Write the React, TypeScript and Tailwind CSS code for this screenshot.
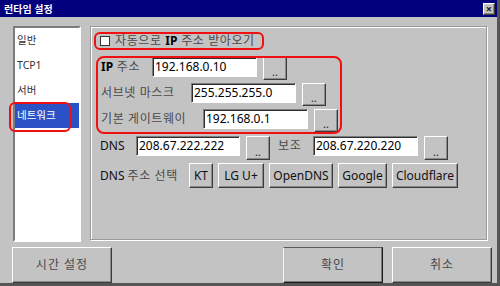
import React from 'react';

const raised =
  'border border-t-white border-l-white border-r-[#3c3c3c] border-b-[#3c3c3c] shadow-[inset_-1px_-1px_0_#8a8a8a] bg-[#c4c3c4]';
const sunken =
  'border border-t-[#7c7c7c] border-l-[#7c7c7c] border-r-white border-b-white shadow-[inset_1px_1px_0_#2e2e2e] bg-white';

const Ko: React.FC<{ children: React.ReactNode }> = ({ children }) => (
  <span className="text-[#4a4a4a] tracking-[0.6px]">{children}</span>
);

const DotButton: React.FC<{ h?: string }> = ({ h = 'h-[23px]' }) => (
  <button className={`${raised} w-[24px] ${h} flex items-end justify-center pb-[2px] text-[11px] leading-none text-[#222]`}>
    ..
  </button>
);

const Field: React.FC<{ value: string; w?: string }> = ({ value, w = 'w-[105px]' }) => (
  <div className={`${sunken} ${w} h-[20px] flex items-center pl-[2px] text-[12px] text-black leading-none`}>{value}</div>
);

interface IpRowProps {
  label: React.ReactNode;
  labelW: string;
  value: string;
  className?: string;
}

const IpRow: React.FC<IpRowProps> = ({ label, labelW, value, className = '' }) => (
  <div className={`flex items-start ${className}`}>
    <div className={`${labelW} h-[20px] flex items-center text-[12px]`}>{label}</div>
    <Field value={value} />
    <div className="ml-[6px]">
      <DotButton />
    </div>
  </div>
);

const ListItem: React.FC<{ label: string; selected?: boolean }> = ({ label, selected }) => (
  <div
    className={`h-[25px] flex items-center pl-[2px] text-[10.5px] ${
      selected ? 'bg-[#2a52c6] text-white' : 'text-[#333]'
    }`}
  >
    {label}
  </div>
);

const PresetButton: React.FC<{ label: string; w: string }> = ({ label, w }) => (
  <button className={`${raised} ${w} h-[25px] flex items-center justify-center text-[12px] text-[#111]`}>{label}</button>
);

const BottomButton: React.FC<{ label: string; def?: boolean }> = ({ label, def }) => (
  <button
    className={`w-[100px] h-[36px] flex items-center justify-center text-[12px] tracking-[1px] text-[#4a4a4a] ${
      def
        ? 'border border-t-[#5a5a5a] border-l-[#f4f4f4] border-r-[#1a1a1a] border-b-[#1a1a1a] shadow-[inset_-1px_-1px_0_#7a7a7a] bg-[#c4c3c4]'
        : raised
    }`}
  >
    {label}
  </button>
);

export default function App() {
  return (
    <div className="w-[500px] h-[286px] bg-[#c4c3c4] border-r-[3px] border-b-[3px] border-[#555] flex flex-col overflow-hidden font-['Noto_Sans','Noto_Sans_CJK_KR',sans-serif]">
      {/* title bar */}
      <div className="h-[17px] bg-[#03007e] flex items-center justify-between pl-[4px] pr-[2px]">
        <span className="text-white text-[10px] font-bold leading-none">런타임 설정</span>
        <button className={`${raised} w-[12px] h-[12px] flex items-center justify-center text-[11px] font-bold leading-none text-[#222]`}>
          ×
        </button>
      </div>

      <div className="flex pl-[13px] pt-[9px]">
        {/* side list */}
        <div className="relative">
          <div className="w-[68px] h-[216px] border-2 border-t-[#7c7c7c] border-l-[#7c7c7c] border-r-white border-b-white bg-white">
            <ListItem label="일반" />
            <ListItem label="TCP1" />
            <ListItem label="서버" />
            <ListItem label="네트워크" selected />
          </div>
          <div className="absolute left-[-4px] top-[76px] w-[62px] h-[30px] border-2 border-[#f01010] rounded-[6px]" />
        </div>

        {/* panel */}
        <div className="ml-[9px] w-[397px] h-[214px] border border-[#9a9a9a] shadow-[inset_1px_1px_0_#fff,1px_1px_0_#fff] pl-[9px] flex flex-col">
          {/* auto ip */}
          <div className="relative mt-[5px] h-[18px] flex items-center">
            <div className="w-[10px] h-[10px] bg-white border border-[#333]" />
            <span className="ml-[5px] text-[12px]">
              <Ko>자동으로 </Ko>
              <span className="font-bold text-black">IP</span>
              <Ko> 주소 받아오기</Ko>
            </span>
            <div className="absolute left-[-6px] top-0 w-[170px] h-[18px] border-2 border-[#f01010] rounded-[6px]" />
          </div>

          {/* ip group */}
          <div className="relative mt-[7px] ml-[1px]">
            <IpRow
              labelW="w-[51px]"
              value="192.168.0.10"
              label={
                <>
                  <span className="font-bold text-black">IP</span>
                  <Ko>&nbsp;주소</Ko>
                </>
              }
            />
            <IpRow className="mt-[3px]" labelW="w-[90px]" value="255.255.255.0" label={<Ko>서브넷 마스크</Ko>} />
            <IpRow className="mt-[3px]" labelW="w-[102px]" value="192.168.0.1" label={<Ko>기본 게이트웨이</Ko>} />
            <div className="absolute left-[-5px] top-[-1px] w-[246px] h-[78px] border-2 border-[#f01010] rounded-[8px]" />
          </div>

          {/* dns */}
          <div className="mt-[4px] flex items-start">
            <div className="w-[36px] h-[20px] flex items-center text-[12px] text-[#111]">DNS</div>
            <Field value="208.67.222.222" w="w-[104px]" />
            <div className="ml-[6px]">
              <DotButton h="h-[24px]" />
            </div>
            <div className="ml-[8px] w-[35px] h-[20px] flex items-center text-[12px]">
              <Ko>보조</Ko>
            </div>
            <Field value="208.67.220.220" />
            <div className="ml-[6px]">
              <DotButton h="h-[24px]" />
            </div>
          </div>

          <div className="mt-[3px] flex items-center">
            <div className="w-[89px] text-[12px] text-[#111]">
              DNS <Ko>주소 선택</Ko>
            </div>
            <div className="flex gap-[5px]">
              <PresetButton label="KT" w="w-[24px]" />
              <PresetButton label="LG U+" w="w-[46px]" />
              <PresetButton label="OpenDNS" w="w-[64px]" />
              <PresetButton label="Google" w="w-[49px]" />
              <PresetButton label="Cloudflare" w="w-[66px]" />
            </div>
          </div>
        </div>
      </div>

      {/* bottom buttons */}
      <div className="mt-[5px] flex pl-[12px] pr-[5px]">
        <BottomButton label="시간 설정" />
        <div className="flex-1" />
        <BottomButton label="확인" def />
        <div className="w-[9px]" />
        <BottomButton label="취소" />
      </div>
    </div>
  );
}
